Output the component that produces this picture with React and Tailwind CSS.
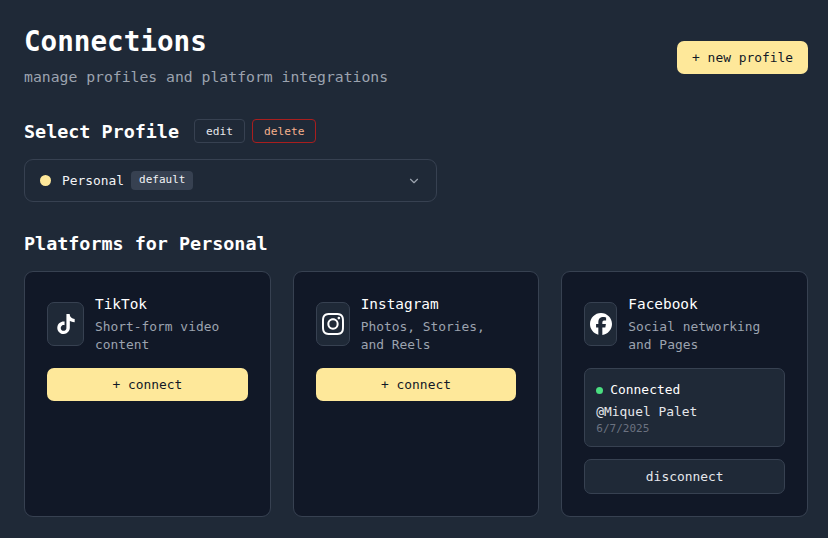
import React from 'react';
import { ChevronDown } from 'lucide-react';
import { SiTiktok, SiInstagram, SiFacebook } from 'react-icons/si';

const platforms = [
  { name: 'TikTok', description: 'Short-form video content', Icon: SiTiktok, iconSize: 20, iconWidth: 'w-[37px]' },
  { name: 'Instagram', description: 'Photos, Stories, and Reels', Icon: SiInstagram, iconSize: 22, iconWidth: 'w-[34px]' },
  {
    name: 'Facebook',
    description: 'Social networking and Pages',
    Icon: SiFacebook,
    iconSize: 22,
    iconWidth: 'w-[33px]',
    account: { handle: '@Miquel Palet', date: '6/7/2025' },
  },
];

const PlatformCard = ({ name, description, Icon, iconSize, iconWidth, account }) => (
  <div className="flex flex-col gap-[14px] rounded-[9px] border border-[#374151] bg-[#111827] p-[22px]">
    <div className="flex gap-[11px]">
      <div className={`flex h-[44px] shrink-0 items-center justify-center self-center rounded-[7px] border border-[#374151] bg-[#1f2937] text-white ${iconWidth}`}>
        <Icon size={iconSize} />
      </div>
      <div className="min-w-0 flex-1 pr-[6px]">
        <h3 className="text-[14.4px] leading-[21px] font-medium text-white">{name}</h3>
        <p className="mt-[3px] text-[12.9px] leading-[18px] text-[#9ca3af]">{description}</p>
      </div>
    </div>
    {account ? (
      <div className="flex flex-col gap-[12px]">
        <div className="rounded-[7px] border border-[#374151] bg-[#1f2937] px-[11px] pt-[12px] pb-[10px]">
          <div className="flex items-center gap-[7px]">
            <span className="h-[7px] w-[7px] rounded-full bg-[#4ade80]" />
            <span className="text-[12.9px] leading-[18px] font-medium text-white">Connected</span>
          </div>
          <p className="mt-[4px] text-[12.9px] leading-[18px] text-[#e5e7eb]">{account.handle}</p>
          <p className="text-[11px] leading-[15px] text-[#6b7280]">{account.date}</p>
        </div>
        <button className="h-[35px] rounded-[7px] border border-[#374151] bg-[#1f2937] text-[12.9px] text-[#e5e7eb]">
          disconnect
        </button>
      </div>
    ) : (
      <button className="h-[33px] rounded-[7px] bg-[#fee89a] pt-[1px] text-[12.9px] text-[#111827]">+ connect</button>
    )}
  </div>
);

export default function App() {
  return (
    <div className="h-[538px] overflow-hidden bg-[#1f2937] pt-[23px] pr-[20px] pl-[24px] font-['DejaVu_Sans_Mono',monospace]">
      {/* Header */}
      <div className="flex items-center justify-between">
        <div>
          <h1 className="text-[27.6px] leading-[38px] font-bold text-white">Connections</h1>
          <p className="mt-[6px] text-[14.75px] leading-[20px] text-[#9ca3af]">manage profiles and platform integrations</p>
        </div>
        <button className="mt-[4px] h-[33px] rounded-[7px] bg-[#fee89a] px-[15px] pt-[1px] text-[12.9px] text-[#111827]">+ new profile</button>
      </div>

      {/* Profile select */}
      <div className="mt-[32px] flex items-center gap-[15px]">
        <h2 className="text-[18.4px] leading-[26px] font-bold text-white">Select Profile</h2>
        <div className="mb-[2px] flex gap-[7px]">
          <button className="h-[24px] rounded-[4px] border border-[#374151] px-[11px] pt-[2px] text-[11.2px] text-[#e5e7eb]">edit</button>
          <button className="h-[24px] rounded-[4px] border border-[#a91e1e] px-[11px] pt-[2px] text-[11.2px] text-[#f5b08c]">delete</button>
        </div>
      </div>
      <div className="mt-[14px] flex h-[43px] w-[413px] items-center justify-between rounded-[9px] border border-[#374151] px-[15px]">
        <div className="flex items-center">
          <span className="h-[11px] w-[11px] rounded-full bg-[#fee89a]" />
          <span className="ml-[11px] text-[12.9px] text-[#f3f4f6]">Personal</span>
          <span className="ml-[7px] rounded-[4px] bg-[#374151] px-[8px] py-[1px] text-[11px] text-[#f3f4f6]">default</span>
        </div>
        <ChevronDown size={14} className="text-[#9ca3af]" />
      </div>

      {/* Platforms */}
      <h2 className="mt-[29px] text-[18.4px] leading-[26px] font-bold text-white">Platforms for Personal</h2>
      <div className="mt-[14px] grid h-[246px] grid-cols-3 gap-[22px]">
        {platforms.map((platform) => (
          <PlatformCard key={platform.name} {...platform} />
        ))}
      </div>
    </div>
  );
}
